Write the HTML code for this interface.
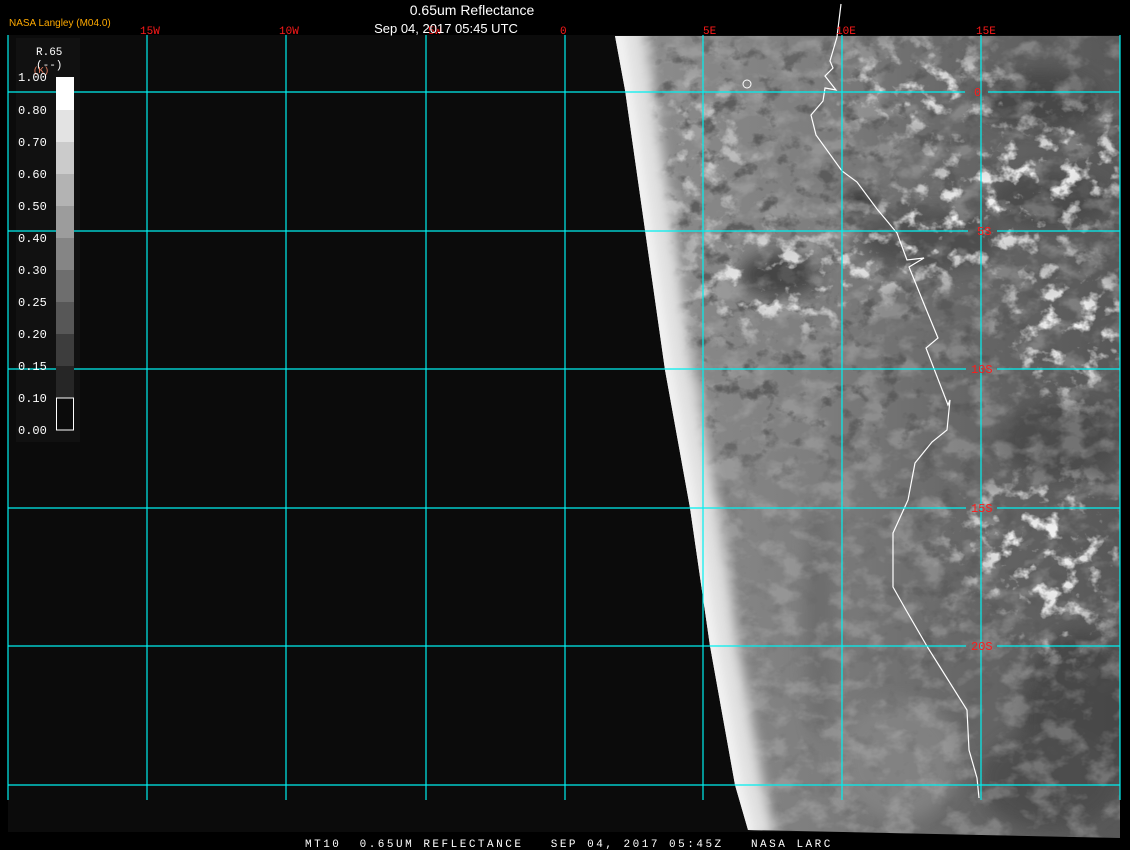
<!DOCTYPE html>
<html><head><meta charset="utf-8"><style>
html,body{margin:0;padding:0;background:#000;width:1130px;height:850px;overflow:hidden}
svg{display:block}
</style></head><body>
<svg width="1130" height="850" viewBox="0 0 1130 850" xmlns="http://www.w3.org/2000/svg">
<defs>
<linearGradient id="g" gradientUnits="userSpaceOnUse" x1="615" y1="0" x2="1120" y2="0">
<stop offset="0" stop-color="#8e8e8e"/>
<stop offset="0.4" stop-color="#7e7e7e"/>
<stop offset="0.7" stop-color="#666"/>
<stop offset="1" stop-color="#585858"/>
</linearGradient>
<filter id="b" x="-50%" y="-50%" width="200%" height="200%"><feGaussianBlur stdDeviation="6"/></filter>
<filter id="b3" x="-50%" y="-50%" width="200%" height="200%"><feGaussianBlur stdDeviation="8"/></filter>
<filter id="b4" x="-50%" y="-50%" width="200%" height="200%"><feGaussianBlur stdDeviation="25"/></filter>
<filter id="n" x="0" y="0" width="100%" height="100%">
<feTurbulence type="fractalNoise" baseFrequency="0.035 0.05" numOctaves="4" seed="7"/>
<feColorMatrix type="matrix" values="0 0 0 0 0.5  0 0 0 0 0.5  0 0 0 0 0.5  0 0 0 4 -1.9"/>
</filter>
<filter id="n2" x="0" y="0" width="100%" height="100%">
<feTurbulence type="fractalNoise" baseFrequency="0.05 0.06" numOctaves="4" seed="3"/>
<feColorMatrix type="matrix" values="0 0 0 0 1  0 0 0 0 1  0 0 0 0 1  0 0 0 5 -2.7"/>
</filter>
<filter id="n3" x="0" y="0" width="100%" height="100%">
<feTurbulence type="fractalNoise" baseFrequency="0.05 0.06" numOctaves="4" seed="11"/>
<feColorMatrix type="matrix" values="0 0 0 0 0.1  0 0 0 0 0.1  0 0 0 0 0.1  0 0 0 5 -2.8"/>
</filter>
<mask id="m" maskUnits="userSpaceOnUse" x="0" y="0" width="1130" height="850">
<g filter="url(#b4)">
<ellipse cx="1000" cy="200" rx="160" ry="60" fill="#fff" transform="rotate(-25 1000 200)"/>
<ellipse cx="780" cy="280" rx="90" ry="50" fill="#fff"/>
<ellipse cx="1070" cy="330" rx="70" ry="70" fill="#fff"/>
<ellipse cx="1040" cy="540" rx="90" ry="60" fill="#fff"/>
<ellipse cx="1060" cy="620" rx="50" ry="30" fill="#fff"/>
<ellipse cx="920" cy="90" rx="90" ry="40" fill="#fff"/>
<ellipse cx="700" cy="150" rx="60" ry="80" fill="#888"/>
</g>
</mask>
<mask id="m2" maskUnits="userSpaceOnUse" x="0" y="0" width="1130" height="850">
<rect x="0" y="0" width="1130" height="850" fill="#333"/>
<g filter="url(#b4)"><rect x="640" y="36" width="480" height="420" fill="#fff"/><rect x="900" y="420" width="220" height="260" fill="#ccc"/></g>
</mask>
<clipPath id="c"><path d="M615,36 L1120,36 L1120,838 L748,830 L735,785 L710,646 L690,508 L665,370 L645,230 L625,90 Z"/></clipPath>
</defs>
<rect x="8" y="35" width="1112" height="797" fill="#0b0b0b"/>
<rect x="16" y="38" width="64" height="404" fill="#111"/>
<path d="M615,36 L1120,36 L1120,838 L748,830 L735,785 L710,646 L690,508 L665,370 L645,230 L625,90 Z" fill="url(#g)"/>
<g clip-path="url(#c)">
<g filter="url(#b3)" opacity="0.85">
<ellipse cx="860" cy="200" rx="18" ry="10" fill="#222"/>
<ellipse cx="780" cy="275" rx="40" ry="22" fill="#3a3a3a"/>
<ellipse cx="1040" cy="100" rx="60" ry="30" fill="#454545"/>
<ellipse cx="1050" cy="200" rx="60" ry="30" fill="#484848"/>
<ellipse cx="1080" cy="720" rx="60" ry="90" fill="#444"/>
<ellipse cx="1060" cy="440" rx="60" ry="40" fill="#4a4a4a"/>
<ellipse cx="930" cy="240" rx="70" ry="30" fill="#4a4a4a"/>
<ellipse cx="900" cy="760" rx="60" ry="60" fill="#858585"/>
<ellipse cx="820" cy="620" rx="15" ry="120" fill="#6a6a6a"/>
<ellipse cx="1050" cy="780" rx="70" ry="50" fill="#4c4c4c"/>
</g>
<rect x="600" y="30" width="530" height="820" filter="url(#n)" opacity="0.35"/>
<rect x="600" y="30" width="530" height="820" filter="url(#n3)" mask="url(#m2)" opacity="0.9"/>
<rect x="600" y="30" width="530" height="820" filter="url(#n2)" mask="url(#m)" opacity="0.9"/>
<polyline fill="none" stroke="#e0e0e0" stroke-width="36" filter="url(#b)" points="625,20 635,90 655,230 675,370 700,508 720,646 745,785 758,840"/>
<polyline fill="none" stroke="#fafafa" stroke-width="12" filter="url(#b)" points="615,20 625,90 645,230 665,370 690,508 710,646 735,785 748,840"/>
</g>
<polyline fill="none" stroke="#fff" stroke-width="1.2" points="841,4 837,37 830,61 833,68 825,76 836,90 825,88 823,101 811,115 816,135 842,171 857,182 877,209 897,233 907,260 924,258 909,267 924,304 938,338 926,348 948,405 950,400 947,430 932,442 915,463 908,500 893,533 893,587 906,610 928,648 940,667 967,710 969,750 977,778 979,798"/>
<ellipse cx="747" cy="84" rx="4" ry="4" fill="none" stroke="#fff"/>
<g stroke="#00f0f0" stroke-width="1.2">
<line x1="8" y1="35" x2="8" y2="800"/><line x1="147" y1="35" x2="147" y2="800"/>
<line x1="286" y1="35" x2="286" y2="800"/><line x1="426" y1="35" x2="426" y2="800"/>
<line x1="565" y1="35" x2="565" y2="800"/><line x1="703" y1="35" x2="703" y2="800"/>
<line x1="842" y1="35" x2="842" y2="800"/><line x1="981" y1="35" x2="981" y2="800"/>
<line x1="1120" y1="35" x2="1120" y2="800"/>
<line x1="8" y1="92" x2="965" y2="92"/><line x1="988" y1="92" x2="1120" y2="92"/>
<line x1="8" y1="231" x2="968" y2="231"/><line x1="997" y1="231" x2="1120" y2="231"/>
<line x1="8" y1="369" x2="966" y2="369"/><line x1="997" y1="369" x2="1120" y2="369"/>
<line x1="8" y1="508" x2="966" y2="508"/><line x1="997" y1="508" x2="1120" y2="508"/>
<line x1="8" y1="646" x2="966" y2="646"/><line x1="997" y1="646" x2="1120" y2="646"/>
<line x1="8" y1="785" x2="1120" y2="785"/>
</g>
<g font-family="Liberation Mono, monospace" font-size="11" fill="#ff1a1a">
<text x="140" y="34">15W</text><text x="279" y="34">10W</text><text x="428" y="34">5W</text>
<text x="560" y="34">0</text><text x="703" y="34">5E</text><text x="836" y="34">10E</text><text x="976" y="34">15E</text>
</g>
<g font-family="Liberation Mono, monospace" font-size="12" fill="#ff1a1a">
<text x="974" y="96">0</text>
<text x="977" y="235">5S</text>
<text x="971" y="373">10S</text>
<text x="971" y="512">15S</text>
<text x="971" y="650">20S</text>
</g>
<text x="472" y="15" text-anchor="middle" font-family="Liberation Sans, sans-serif" font-size="14" fill="#fff">0.65um Reflectance</text>
<text x="446" y="33" text-anchor="middle" font-family="Liberation Sans, sans-serif" font-size="13" fill="#fff">Sep 04, 2017 05:45 UTC</text>
<text x="9" y="26" font-family="Liberation Sans, sans-serif" font-size="10" fill="#ffaa00">NASA Langley (M04.0)</text>
<g font-family="Liberation Mono, monospace" font-size="11" fill="#fff">
<text x="36" y="55">R.65</text><text x="36" y="68">(--)</text>
<text x="33" y="73" fill="#f08060" font-size="9">(K)</text>
</g>
<g>
<rect x="56" y="77" width="18" height="33" fill="#fff"/>
<rect x="56" y="110" width="18" height="32" fill="#e3e3e3"/>
<rect x="56" y="142" width="18" height="32" fill="#cbcbcb"/>
<rect x="56" y="174" width="18" height="32" fill="#b3b3b3"/>
<rect x="56" y="206" width="18" height="32" fill="#9c9c9c"/>
<rect x="56" y="238" width="18" height="32" fill="#858585"/>
<rect x="56" y="270" width="18" height="32" fill="#6e6e6e"/>
<rect x="56" y="302" width="18" height="32" fill="#575757"/>
<rect x="56" y="334" width="18" height="32" fill="#3d3d3d"/>
<rect x="56" y="366" width="18" height="32" fill="#262626"/>
<rect x="56.5" y="398" width="17" height="32" fill="#0b0b0b" stroke="#fff"/>
</g>
<g font-family="Liberation Mono, monospace" font-size="12" fill="#fff">
<text x="18" y="81">1.00</text><text x="18" y="114">0.80</text><text x="18" y="146">0.70</text>
<text x="18" y="178">0.60</text><text x="18" y="210">0.50</text><text x="18" y="242">0.40</text>
<text x="18" y="274">0.30</text><text x="18" y="306">0.25</text><text x="18" y="338">0.20</text>
<text x="18" y="370">0.15</text><text x="18" y="402">0.10</text><text x="18" y="434">0.00</text>
</g>
<rect x="0" y="838" width="1130" height="12" fill="#000"/>
<text x="305" y="847" font-family="Liberation Mono, monospace" font-size="11" fill="#fff" letter-spacing="2.5" xml:space="preserve">MT10  0.65UM REFLECTANCE   SEP 04, 2017 05:45Z   NASA LARC</text>
</svg>
</body></html>
